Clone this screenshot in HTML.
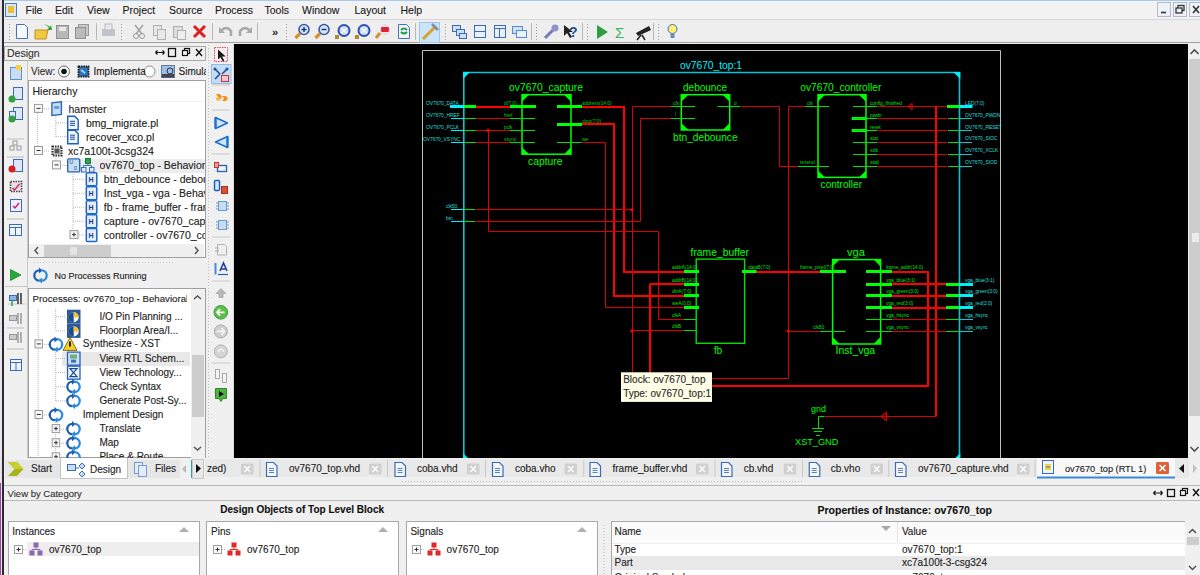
<!DOCTYPE html>
<html><head><meta charset="utf-8">
<style>
*{box-sizing:border-box;margin:0;padding:0}
html,body{width:1200px;height:575px;overflow:hidden;background:#f0f0f0;font-family:"Liberation Sans",sans-serif;font-size:10px;color:#1e1e1e}
.a{position:absolute}
.t{position:absolute;white-space:nowrap;-webkit-text-stroke:0.12px currentColor}
svg{position:absolute;overflow:hidden}
</style></head><body>

<div class="a" style="left:0px;top:0px;width:2px;height:575px;background:#e6e2ea;"></div>
<div class="a" style="left:2px;top:0px;width:2px;height:575px;background:#2b2b2b;"></div>
<div class="a" style="left:0px;top:483px;width:1px;height:92px;background:#a040a8;"></div>
<div class="a" style="left:4px;top:0px;width:1196px;height:1px;background:#a8c8ee;"></div>
<div class="a" style="left:4px;top:1px;width:1196px;height:18px;background:#f2f2f2;"></div>
<div class="a" style="left:4px;top:19px;width:1196px;height:1px;background:#d8d8d8;"></div>
<div class="a" style="left:4px;top:20px;width:1196px;height:22px;background:#eeeeee;"></div>
<div class="a" style="left:4px;top:42px;width:1196px;height:1px;background:#a0a0a0;"></div>
<div class="a" style="left:4px;top:43px;width:1196px;height:2px;background:#f0f0f0;"></div>
<svg style="left:5px;top:3px" width="12" height="14"><rect x="0.5" y="0.5" width="11" height="13" fill="#d8e8f8" stroke="#4a7cc0"/><rect x="3" y="3" width="6" height="7" fill="#f0c030"/></svg>
<div class="t" style="left:25.5px;top:3.0px;line-height:14px;font-size:10.5px;color:#1a1a1a;">File</div>
<div class="t" style="left:55px;top:3.0px;line-height:14px;font-size:10.5px;color:#1a1a1a;">Edit</div>
<div class="t" style="left:87px;top:3.0px;line-height:14px;font-size:10.5px;color:#1a1a1a;">View</div>
<div class="t" style="left:122.5px;top:3.0px;line-height:14px;font-size:10.5px;color:#1a1a1a;">Project</div>
<div class="t" style="left:169px;top:3.0px;line-height:14px;font-size:10.5px;color:#1a1a1a;">Source</div>
<div class="t" style="left:215px;top:3.0px;line-height:14px;font-size:10.5px;color:#1a1a1a;">Process</div>
<div class="t" style="left:264.5px;top:3.0px;line-height:14px;font-size:10.5px;color:#1a1a1a;">Tools</div>
<div class="t" style="left:302px;top:3.0px;line-height:14px;font-size:10.5px;color:#1a1a1a;">Window</div>
<div class="t" style="left:354.5px;top:3.0px;line-height:14px;font-size:10.5px;color:#1a1a1a;">Layout</div>
<div class="t" style="left:400.5px;top:3.0px;line-height:14px;font-size:10.5px;color:#1a1a1a;">Help</div>
<div class="a" style="left:1156.5px;top:1.5px;width:14.5px;height:15px;background:#eef2f8;border:1px solid #b4bcc8"></div>
<div class="a" style="left:1172.5px;top:1.5px;width:14.5px;height:15px;background:#eef2f8;border:1px solid #b4bcc8"></div>
<div class="a" style="left:1188.5px;top:1.5px;width:13.5px;height:15px;background:#eef2f8;border:1px solid #b4bcc8"></div>
<svg style="left:1156px;top:1px" width="44" height="17"><path d="M5 11.5h5" stroke="#333" stroke-width="1.6"/><rect x="22" y="4.5" width="6" height="5" fill="none" stroke="#333" stroke-width="1.3"/><rect x="20" y="7" width="6" height="5" fill="#eef2f8" stroke="#333" stroke-width="1.3"/><path d="M37 5l6 7M43 5l-6 7" stroke="#333" stroke-width="1.6"/></svg>

<svg style="left:0;top:0" width="700" height="45">
 <!-- new -->
 <path d="M16.5 24.5h8l3 3v11h-11z" fill="#f4f8ff" stroke="#4a70b8"/>
 <!-- open -->
 <path d="M35 30h13l-2 9h-11z" fill="#f0c840" stroke="#c09020"/><path d="M40 27q5-5 9 1l-2 2h5l-1-5-1 2q-5-5-10 0z" fill="#30a030"/>
 <!-- save -->
 <rect x="56.5" y="25.5" width="12" height="13" fill="#b8b8b8" stroke="#909090"/><rect x="59" y="27" width="7" height="4" fill="#e8e8e8"/>
 <rect x="78.5" y="24.5" width="10" height="11" fill="#c8c8c8" stroke="#999"/><rect x="75.5" y="27.5" width="10" height="11" fill="#bbb" stroke="#909090"/>
 <!-- print -->
 <rect x="102" y="29" width="13" height="7" fill="#c0c4cc"/><rect x="105" y="24" width="7" height="6" fill="#e8e8f0" stroke="#bbb"/>
 <!-- cut copy paste -->
 <path d="M135 25l7 9M143 25l-7 9" stroke="#a0a0a0" stroke-width="1.5"/><circle cx="136" cy="36" r="2.5" fill="none" stroke="#999"/><circle cx="142" cy="36" r="2.5" fill="none" stroke="#999"/>
 <rect x="153.5" y="25.5" width="8" height="10" fill="#e8e8e8" stroke="#b0b0b0"/><rect x="157.5" y="29.5" width="8" height="10" fill="#e8e8e8" stroke="#b0b0b0"/>
 <rect x="173.5" y="26.5" width="9" height="11" fill="#ddd" stroke="#b0b0b0"/><rect x="177.5" y="30.5" width="8" height="9" fill="#eee" stroke="#b0b0b0"/>
 <path d="M194 26l11 11M205 26l-11 11" stroke="#e02020" stroke-width="3"/>
 <!-- undo redo -->
 <path d="M221 31q5-6 10 0v5" fill="none" stroke="#a8a8a8" stroke-width="2.5"/><path d="M219 27v6h6z" fill="#a8a8a8"/>
 <path d="M250 31q-5-6-10 0v5" fill="none" stroke="#a8a8a8" stroke-width="2.5"/><path d="M252 27v6h-6z" fill="#a8a8a8"/>
 <text x="272" y="36" font-size="11" font-weight="bold" fill="#222" font-family="Liberation Sans">&#187;</text>
 <!-- zoom tools -->
 <g>
 <circle cx="304" cy="29.5" r="5" fill="#d8e8fa" stroke="#3a5aa8" stroke-width="1.6"/><path d="M301.5 29.5h5M304 27v5" stroke="#1a3a80" stroke-width="1.5"/><path d="M300 33.5l-4.5 4.5" stroke="#d89030" stroke-width="3.2"/>
 <circle cx="324" cy="29.5" r="5" fill="#d8e8fa" stroke="#3a5aa8" stroke-width="1.6"/><path d="M321.5 29.5h5" stroke="#1a3a80" stroke-width="1.5"/><path d="M320 33.5l-4.5 4.5" stroke="#d89030" stroke-width="3.2"/>
 <circle cx="344" cy="30.5" r="5.5" fill="#c8dcf4" stroke="#3050b0" stroke-width="2"/><path d="M341 27.5l6 6M347 27.5l-6 6" stroke="#f4f8ff" stroke-width="1.3"/><rect x="335" y="35" width="4" height="4" fill="#b08a30"/>
 <circle cx="364" cy="30.5" r="5.5" fill="#c8dcf4" stroke="#3050b0" stroke-width="2"/><path d="M361 27.5l6 6M367 27.5l-6 6" stroke="#f4f8ff" stroke-width="1.3"/><rect x="355" y="35" width="4" height="4" fill="#b08a30"/>
 <rect x="381" y="27" width="8" height="5" fill="#e02030"/><circle cx="385" cy="29.5" r="4.5" fill="none" stroke="#d8c8e0"/><path d="M380 33l-4 5" stroke="#d89030" stroke-width="3.2"/>
 </g>
 <path d="M398.5 24.5h8l3 3v11h-11z" fill="#eef4ff" stroke="#4a70b8"/><path d="M401 30q3-3 6 0M407 32q-3 3-6 0" fill="none" stroke="#20a040" stroke-width="2"/>
 <!-- highlighted hammer -->
 <rect x="419.5" y="22.5" width="20" height="20" fill="#cce4f7" stroke="#99c9ef"/>
 <path d="M423 39l12-12" stroke="#d8a030" stroke-width="3"/><path d="M431 25l6 6 2-2-6-6z" fill="#8a8aa0"/>
 <!-- window layout icons -->
 <rect x="452.5" y="25.5" width="8" height="6" fill="#cfe0f5" stroke="#3a6ab8"/><rect x="456.5" y="29.5" width="8" height="6" fill="#cfe0f5" stroke="#3a6ab8"/><rect x="459.5" y="33.5" width="7" height="5" fill="#cfe0f5" stroke="#3a6ab8"/>
 <rect x="474.5" y="25.5" width="11" height="12" fill="#e8f0fa" stroke="#3a6ab8"/><path d="M474.5 31.5h11" stroke="#3a6ab8"/>
 <rect x="494.5" y="25.5" width="11" height="12" fill="#e8f0fa" stroke="#3a6ab8"/><path d="M494.5 28.5h11M499.5 28.5v9" stroke="#3a6ab8"/>
 <rect x="512.5" y="26.5" width="10" height="7" fill="#cfe0f5" stroke="#5a8ad0"/><rect x="516.5" y="30.5" width="10" height="7" fill="#e8f0fa" stroke="#5a8ad0"/>
 <!-- wrench, help -->
 <path d="M545 38l9-9" stroke="#7878b8" stroke-width="3"/><circle cx="555" cy="28" r="3.5" fill="#9090c8"/>
 <path d="M564 25l0 11 3-3 3 5 2-1-3-5h4z" fill="#222"/><text x="569" y="37" font-size="14" font-weight="bold" fill="#1e4ea0" font-family="Liberation Sans">?</text>
 <!-- run, sigma, telescope -->
 <path d="M597 25l11 7-11 7z" fill="#2aa040"/>
 <text x="615" y="38" font-size="15" fill="#40b860" font-family="Liberation Sans">&#931;</text>
 <path d="M636 33l13-7 2 4-13 6z" fill="#222"/><path d="M641 35l-4 5M642 35l3 5" stroke="#222" stroke-width="1.5"/>
 <!-- bulb -->
 <circle cx="672.5" cy="29" r="4.5" fill="#fff070" stroke="#3a70c0"/><rect x="670.5" y="33" width="4" height="5" fill="#6a8ac0"/>
</svg>
<div class="a" style="left:96px;top:23px;width:1px;height:17px;background:#b8b8b8;"></div>
<div class="a" style="left:121px;top:24px;width:1px;height:1px;background:#9a9a9a;"></div>
<div class="a" style="left:121px;top:27px;width:1px;height:1px;background:#9a9a9a;"></div>
<div class="a" style="left:121px;top:30px;width:1px;height:1px;background:#9a9a9a;"></div>
<div class="a" style="left:121px;top:33px;width:1px;height:1px;background:#9a9a9a;"></div>
<div class="a" style="left:121px;top:36px;width:1px;height:1px;background:#9a9a9a;"></div>
<div class="a" style="left:121px;top:39px;width:1px;height:1px;background:#9a9a9a;"></div>
<div class="a" style="left:212px;top:23px;width:1px;height:17px;background:#b8b8b8;"></div>
<div class="a" style="left:257px;top:23px;width:1px;height:17px;background:#b8b8b8;"></div>
<div class="a" style="left:286px;top:24px;width:1px;height:1px;background:#9a9a9a;"></div>
<div class="a" style="left:286px;top:27px;width:1px;height:1px;background:#9a9a9a;"></div>
<div class="a" style="left:286px;top:30px;width:1px;height:1px;background:#9a9a9a;"></div>
<div class="a" style="left:286px;top:33px;width:1px;height:1px;background:#9a9a9a;"></div>
<div class="a" style="left:286px;top:36px;width:1px;height:1px;background:#9a9a9a;"></div>
<div class="a" style="left:286px;top:39px;width:1px;height:1px;background:#9a9a9a;"></div>
<div class="a" style="left:415px;top:23px;width:1px;height:17px;background:#b8b8b8;"></div>
<div class="a" style="left:445px;top:24px;width:1px;height:1px;background:#9a9a9a;"></div>
<div class="a" style="left:445px;top:27px;width:1px;height:1px;background:#9a9a9a;"></div>
<div class="a" style="left:445px;top:30px;width:1px;height:1px;background:#9a9a9a;"></div>
<div class="a" style="left:445px;top:33px;width:1px;height:1px;background:#9a9a9a;"></div>
<div class="a" style="left:445px;top:36px;width:1px;height:1px;background:#9a9a9a;"></div>
<div class="a" style="left:445px;top:39px;width:1px;height:1px;background:#9a9a9a;"></div>
<div class="a" style="left:531px;top:23px;width:1px;height:17px;background:#b8b8b8;"></div>
<div class="a" style="left:536px;top:24px;width:1px;height:1px;background:#9a9a9a;"></div>
<div class="a" style="left:536px;top:27px;width:1px;height:1px;background:#9a9a9a;"></div>
<div class="a" style="left:536px;top:30px;width:1px;height:1px;background:#9a9a9a;"></div>
<div class="a" style="left:536px;top:33px;width:1px;height:1px;background:#9a9a9a;"></div>
<div class="a" style="left:536px;top:36px;width:1px;height:1px;background:#9a9a9a;"></div>
<div class="a" style="left:536px;top:39px;width:1px;height:1px;background:#9a9a9a;"></div>
<div class="a" style="left:582px;top:23px;width:1px;height:17px;background:#b8b8b8;"></div>
<div class="a" style="left:587px;top:24px;width:1px;height:1px;background:#9a9a9a;"></div>
<div class="a" style="left:587px;top:27px;width:1px;height:1px;background:#9a9a9a;"></div>
<div class="a" style="left:587px;top:30px;width:1px;height:1px;background:#9a9a9a;"></div>
<div class="a" style="left:587px;top:33px;width:1px;height:1px;background:#9a9a9a;"></div>
<div class="a" style="left:587px;top:36px;width:1px;height:1px;background:#9a9a9a;"></div>
<div class="a" style="left:587px;top:39px;width:1px;height:1px;background:#9a9a9a;"></div>
<div class="a" style="left:653px;top:23px;width:1px;height:17px;background:#b8b8b8;"></div>
<div class="a" style="left:658px;top:24px;width:1px;height:1px;background:#9a9a9a;"></div>
<div class="a" style="left:658px;top:27px;width:1px;height:1px;background:#9a9a9a;"></div>
<div class="a" style="left:658px;top:30px;width:1px;height:1px;background:#9a9a9a;"></div>
<div class="a" style="left:658px;top:33px;width:1px;height:1px;background:#9a9a9a;"></div>
<div class="a" style="left:658px;top:36px;width:1px;height:1px;background:#9a9a9a;"></div>
<div class="a" style="left:658px;top:39px;width:1px;height:1px;background:#9a9a9a;"></div>
<div class="a" style="left:8.5px;top:24px;width:1px;height:1px;background:#9a9a9a;"></div>
<div class="a" style="left:8.5px;top:27px;width:1px;height:1px;background:#9a9a9a;"></div>
<div class="a" style="left:8.5px;top:30px;width:1px;height:1px;background:#9a9a9a;"></div>
<div class="a" style="left:8.5px;top:33px;width:1px;height:1px;background:#9a9a9a;"></div>
<div class="a" style="left:8.5px;top:36px;width:1px;height:1px;background:#9a9a9a;"></div>
<div class="a" style="left:8.5px;top:39px;width:1px;height:1px;background:#9a9a9a;"></div>
<div class="a" style="left:4px;top:45px;width:203px;height:415px;background:#f0f0f0;"></div>
<div class="a" style="left:4px;top:45.5px;width:202px;height:15px;background:#f0f0f0;border:1px solid #a8a8a8"></div>
<div class="t" style="left:7px;top:46.0px;line-height:14px;font-size:10.5px;color:#333;">Design</div>
<svg style="left:150px;top:46px" width="56" height="14">
<path d="M5.5 6.5h9M5.5 6.5l2-2M5.5 6.5l2 2M14.5 6.5l-2-2M14.5 6.5l-2 2" stroke="#111" stroke-width="1.2" fill="none"/>
<rect x="18.5" y="2.5" width="7" height="8" fill="none" stroke="#111" stroke-width="1.3"/>
<rect x="34.5" y="2.5" width="5" height="5" fill="none" stroke="#111" stroke-width="1.2"/><rect x="32.5" y="4.5" width="5" height="5" fill="#f0f0f0" stroke="#111" stroke-width="1.2"/>
<path d="M46 3l6 7M52 3l-6 7" stroke="#111" stroke-width="1.4"/>
</svg>
<div class="a" style="left:27px;top:61px;width:1px;height:397px;background:#c8c8c8;"></div>
<div class="t" style="left:31px;top:65.0px;line-height:14px;font-size:10px;color:#333;">View:</div>
<svg style="left:55px;top:64px" width="160" height="16">
<circle cx="9" cy="7.5" r="5.5" fill="#fff" stroke="#666"/><circle cx="9" cy="7.5" r="2.8" fill="#111"/>
<rect x="23.5" y="2.5" width="10" height="10" fill="#2f78c8" stroke="#1a1a1a" stroke-width="1.8" stroke-dasharray="1.6 0.8"/><path d="M26 6l4 3" stroke="#e8f0ff" stroke-width="1.2"/>
<circle cx="94.5" cy="7.5" r="5.5" fill="#fff" stroke="#888"/>
<rect x="106.5" y="1.5" width="13" height="12" fill="#9ac0ec" stroke="#6a7a90"/><circle cx="115" cy="7" r="3" fill="none" stroke="#333"/><rect x="107" y="10" width="12" height="3.5" fill="#445"/>
</svg>
<div class="t" style="left:93.5px;top:65.0px;line-height:14px;font-size:10px;color:#222;">Implementa</div>
<div class="t" style="left:178.5px;top:65.0px;line-height:14px;font-size:10px;color:#222;">Simula</div>
<div class="a" style="left:28px;top:80px;width:178px;height:1px;background:#a0a0a0;"></div>
<div class="a" style="left:28px;top:81px;width:177.5px;height:177px;background:#ffffff;border-left:1px solid #a0a0a0;border-right:1px solid #a0a0a0;border-bottom:1px solid #a0a0a0"></div>
<div class="t" style="left:32.5px;top:84.0px;line-height:14px;font-size:10.5px;color:#222;">Hierarchy</div>
<div class="a" style="left:29px;top:101px;width:175px;height:1px;background:#f0f0f0;"></div>
<div class="a" style="left:67px;top:158.5px;width:138px;height:14px;background:#ececec;"></div>
<svg style="left:28px;top:101px" width="177" height="142"><path d="M9.600000000000001 12V50" stroke="#b8b8b8" stroke-dasharray="1 1"/><path d="M14 7.900000000000006H22" stroke="#b8b8b8" stroke-dasharray="1 1"/><path d="M14 50H22" stroke="#b8b8b8" stroke-dasharray="1 1"/><path d="M27.799999999999997 15V36" stroke="#b8b8b8" stroke-dasharray="1 1"/><path d="M28 21.799999999999997H39" stroke="#b8b8b8" stroke-dasharray="1 1"/><path d="M28 35.69999999999999H39" stroke="#b8b8b8" stroke-dasharray="1 1"/><path d="M27.799999999999997 55V64" stroke="#b8b8b8" stroke-dasharray="1 1"/><path d="M32 64.4H39" stroke="#b8b8b8" stroke-dasharray="1 1"/><path d="M45 71V134" stroke="#b8b8b8" stroke-dasharray="1 1"/><path d="M45 78.30000000000001H57" stroke="#b8b8b8" stroke-dasharray="1 1"/><path d="M45 92.30000000000001H57" stroke="#b8b8b8" stroke-dasharray="1 1"/><path d="M45 106.19999999999999H57" stroke="#b8b8b8" stroke-dasharray="1 1"/><path d="M45 120.19999999999999H57" stroke="#b8b8b8" stroke-dasharray="1 1"/><path d="M49 134.1H57" stroke="#b8b8b8" stroke-dasharray="1 1"/><rect x="6.5" y="3.4000000000000057" width="8" height="8" fill="#f6f6f6" stroke="#9a9a9a"/><path d="M8.5 7.400000000000006h4" stroke="#333"/><rect x="6.5" y="45.5" width="8" height="8" fill="#f6f6f6" stroke="#9a9a9a"/><path d="M8.5 49.5h4" stroke="#333"/><rect x="24.5" y="59.900000000000006" width="8" height="8" fill="#f6f6f6" stroke="#9a9a9a"/><path d="M26.5 63.900000000000006h4" stroke="#333"/><rect x="42.0" y="129.6" width="8" height="8" fill="#f6f6f6" stroke="#9a9a9a"/><path d="M44.0 133.6h4" stroke="#333"/><path d="M46.0 131.6v4" stroke="#333"/><path d="M23.900000000000002 1.9000000000000057l9.5 -1v12.5l-9.5 1z" fill="#c8def6" stroke="#2a68b8" stroke-width="1.4"/><rect x="26.200000000000003" y="4.900000000000006" width="5" height="3" fill="#6a9ad8"/><path d="M39.7 15.299999999999997h7l3.5 3.5v10h-10.5z" fill="#eef4fc" stroke="#1f5fb8" stroke-width="1.4"/><path d="M42 20.299999999999997h5M42 22.299999999999997h5M42 24.299999999999997h5" stroke="#1a4a9a"/><path d="M39.7 29.19999999999999h7l3.5 3.5v10h-10.5z" fill="#eef4fc" stroke="#1f5fb8" stroke-width="1.4"/><path d="M42 34.19999999999999h5M42 36.19999999999999h5M42 38.19999999999999h5" stroke="#1a4a9a"/><rect x="24.5" y="45.5" width="9" height="9" fill="#e8e8e8" stroke="#333" stroke-width="2.2" stroke-dasharray="1.5 1"/><rect x="26.5" y="47.5" width="5" height="5" fill="#555"/><rect x="39.7" y="57.900000000000006" width="12" height="13" rx="1" fill="#c8def6" stroke="#2a68b8" stroke-width="1.4"/><text x="41.5" y="63.400000000000006" font-size="5" fill="#1a3a80" font-family="Liberation Sans">U</text><text x="46" y="69.4" font-size="5" fill="#1a3a80" font-family="Liberation Sans">0</text><rect x="57.5" y="57.5" width="5" height="5" fill="#30a050" stroke="#1a7a30"/><rect x="53.5" y="66.5" width="4.5" height="4.5" fill="#dde8f8" stroke="#3a70b8"/><rect x="61.5" y="66.5" width="4.5" height="4.5" fill="#dde8f8" stroke="#3a70b8"/><path d="M60 62.5v2M55.5 66.5v-2h8v2" stroke="#3a70b8" fill="none"/><rect x="58.3" y="71.80000000000001" width="10.5" height="13" rx="1" fill="#e4eefa" stroke="#1f68c8" stroke-width="1.5"/><text x="60.599999999999994" y="81.30000000000001" font-size="7" font-weight="bold" fill="#1a3a80" font-family="Liberation Sans">H</text><rect x="58.3" y="85.80000000000001" width="10.5" height="13" rx="1" fill="#e4eefa" stroke="#1f68c8" stroke-width="1.5"/><text x="60.599999999999994" y="95.30000000000001" font-size="7" font-weight="bold" fill="#1a3a80" font-family="Liberation Sans">H</text><rect x="58.3" y="99.69999999999999" width="10.5" height="13" rx="1" fill="#e4eefa" stroke="#1f68c8" stroke-width="1.5"/><text x="60.599999999999994" y="109.19999999999999" font-size="7" font-weight="bold" fill="#1a3a80" font-family="Liberation Sans">H</text><rect x="58.3" y="113.69999999999999" width="10.5" height="13" rx="1" fill="#e4eefa" stroke="#1f68c8" stroke-width="1.5"/><text x="60.599999999999994" y="123.19999999999999" font-size="7" font-weight="bold" fill="#1a3a80" font-family="Liberation Sans">H</text><rect x="58.3" y="127.6" width="10.5" height="13" rx="1" fill="#e4eefa" stroke="#1f68c8" stroke-width="1.5"/><text x="60.599999999999994" y="137.1" font-size="7" font-weight="bold" fill="#1a3a80" font-family="Liberation Sans">H</text></svg>
<div class="t" style="left:68.5px;top:101.9px;line-height:14px;font-size:10.5px;color:#222;width:136.5px;overflow:hidden">hamster</div>
<div class="t" style="left:86px;top:115.8px;line-height:14px;font-size:10.5px;color:#222;width:119px;overflow:hidden">bmg_migrate.pl</div>
<div class="t" style="left:86px;top:129.7px;line-height:14px;font-size:10.5px;color:#222;width:119px;overflow:hidden">recover_xco.pl</div>
<div class="t" style="left:68px;top:144.0px;line-height:14px;font-size:10.5px;color:#222;width:137px;overflow:hidden">xc7a100t-3csg324</div>
<div class="t" style="left:99.6px;top:158.4px;line-height:14px;font-size:10.5px;color:#222;width:105.4px;overflow:hidden">ov7670_top - Behavioral (ov7670_top.vhd)</div>
<div class="t" style="left:103.8px;top:172.3px;line-height:14px;font-size:10.5px;color:#222;width:101.2px;overflow:hidden">btn_debounce - debounce - Behavioral</div>
<div class="t" style="left:103.8px;top:186.3px;line-height:14px;font-size:10.5px;color:#222;width:101.2px;overflow:hidden">Inst_vga - vga - Behavioral</div>
<div class="t" style="left:103.8px;top:200.2px;line-height:14px;font-size:10.5px;color:#222;width:101.2px;overflow:hidden">fb - frame_buffer - frame_buffer</div>
<div class="t" style="left:103.8px;top:214.2px;line-height:14px;font-size:10.5px;color:#222;width:101.2px;overflow:hidden">capture - ov7670_capture - Behavioral</div>
<div class="t" style="left:103.8px;top:228.1px;line-height:14px;font-size:10.5px;color:#222;width:101.2px;overflow:hidden">controller - ov7670_controller - Behavioral</div>
<div class="a" style="left:29px;top:243.5px;width:175px;height:13.5px;background:#f0f0f0;"></div>
<div class="a" style="left:44px;top:244.5px;width:67px;height:12px;background:#cdcdcd;"></div>
<div class="a" style="left:70px;top:246.5px;width:7px;height:8px;background:#e4e4e4;"></div>
<svg style="left:29px;top:243px" width="176" height="15"><path d="M9 4l-3 3.5 3 3.5" fill="none" stroke="#555" stroke-width="1.5"/><path d="M166 4l3 3.5-3 3.5" fill="none" stroke="#555" stroke-width="1.5"/></svg>
<svg style="left:4px;top:259px" width="200" height="28"><path d="M6.5 10.5l10.5 5.5-10.5 5.5z" fill="#28a83a" stroke="#1a8a2a" stroke-width="0.8"/><g transform="translate(36.5,16.5)"><path d="M-1 -5.2A5.2 5.2 0 0 0 -1 5.2" stroke="#1f5fb0" stroke-width="2.3" fill="none"/><path d="M-1.5 -8l3.5 3-3.5 3z" fill="#1f5fb0"/><path d="M1 5.2A5.2 5.2 0 0 0 1 -5.2" stroke="#2a8ae0" stroke-width="2.3" fill="none"/><path d="M1.5 8l-3.5-3 3.5-3z" fill="#2a8ae0"/></g><path d="M30 3.5H170" stroke="#c8c8c8" stroke-dasharray="1 2"/></svg>
<div class="a" style="left:5px;top:286px;width:22px;height:1px;background:#c8c8c8;"></div>
<div class="t" style="left:54.5px;top:268.5px;line-height:14px;font-size:9px;color:#222;">No Processes Running</div>
<div class="a" style="left:28px;top:288px;width:177.5px;height:170px;background:#ffffff;border:1px solid #a0a0a0"></div>
<div class="t" style="left:32.6px;top:292.0px;line-height:14px;font-size:9.7px;color:#222;width:154px;overflow:hidden">Processes: ov7670_top - Behavioral</div>
<div class="a" style="left:190.5px;top:289px;width:14px;height:169px;background:#f0f0f0;"></div>
<div class="a" style="left:192px;top:354.7px;width:12px;height:62px;background:#cdcdcd;"></div>
<svg style="left:190px;top:289px" width="15" height="169"><path d="M4 10l3.5-3 3.5 3" fill="none" stroke="#555" stroke-width="1.5"/><path d="M4 158l3.5 3 3.5-3" fill="none" stroke="#555" stroke-width="1.5"/></svg>
<div class="a" style="left:62px;top:351.6px;width:128px;height:14px;background:#e8e8e8;"></div>
<svg style="left:28px;top:309px" width="162" height="149"><path d="M10.200000000000003 0V31" stroke="#b8b8b8" stroke-dasharray="1 1"/><path d="M10.200000000000003 40V102" stroke="#b8b8b8" stroke-dasharray="1 1"/><path d="M10.200000000000003 110V151" stroke="#b8b8b8" stroke-dasharray="1 1"/><path d="M27.700000000000003 0V22" stroke="#b8b8b8" stroke-dasharray="1 1"/><path d="M28 7.699999999999989H38" stroke="#b8b8b8" stroke-dasharray="1 1"/><path d="M28 21.899999999999977H38" stroke="#b8b8b8" stroke-dasharray="1 1"/><path d="M27.700000000000003 41V92" stroke="#b8b8b8" stroke-dasharray="1 1"/><path d="M28 49.60000000000002H38" stroke="#b8b8b8" stroke-dasharray="1 1"/><path d="M28 63.69999999999999H38" stroke="#b8b8b8" stroke-dasharray="1 1"/><path d="M28 77.80000000000001H38" stroke="#b8b8b8" stroke-dasharray="1 1"/><path d="M28 91.89999999999998H38" stroke="#b8b8b8" stroke-dasharray="1 1"/><path d="M14 35.39999999999998H21" stroke="#b8b8b8" stroke-dasharray="1 1"/><path d="M14 106H21" stroke="#b8b8b8" stroke-dasharray="1 1"/><path d="M27.700000000000003 111V151" stroke="#b8b8b8" stroke-dasharray="1 1"/><path d="M31 120.10000000000002H38" stroke="#b8b8b8" stroke-dasharray="1 1"/><path d="M31 134.2H38" stroke="#b8b8b8" stroke-dasharray="1 1"/><path d="M31 148.3H38" stroke="#b8b8b8" stroke-dasharray="1 1"/><rect x="7.0" y="30.899999999999977" width="7.5" height="8" fill="#f6f6f6" stroke="#9a9a9a"/><path d="M8.8 34.89999999999998h4" stroke="#333"/><rect x="7.0" y="101.5" width="7.5" height="8" fill="#f6f6f6" stroke="#9a9a9a"/><path d="M8.8 105.5h4" stroke="#333"/><rect x="24.200000000000003" y="115.60000000000002" width="7.5" height="8" fill="#f6f6f6" stroke="#9a9a9a"/><path d="M26.000000000000004 119.60000000000002h4" stroke="#333"/><path d="M28.000000000000004 117.60000000000002v4" stroke="#333"/><rect x="24.200000000000003" y="129.7" width="7.5" height="8" fill="#f6f6f6" stroke="#9a9a9a"/><path d="M26.000000000000004 133.7h4" stroke="#333"/><path d="M28.000000000000004 131.7v4" stroke="#333"/><rect x="24.200000000000003" y="143.8" width="7.5" height="8" fill="#f6f6f6" stroke="#9a9a9a"/><path d="M26.000000000000004 147.8h4" stroke="#333"/><path d="M28.000000000000004 145.8v4" stroke="#333"/><rect x="39" y="0.6999999999999886" width="13.5" height="14" fill="#2a5a9a"/><circle cx="45.7" cy="8.199999999999989" r="5" fill="#f4f4f4"/><path d="M45.7 3.1999999999999886a5 5 0 0 0 0 10z" fill="#1a4a90"/><path d="M45.7 3.1999999999999886a5 5 0 0 1 5 5h-5z" fill="#f8c020"/><rect x="39" y="14.899999999999977" width="13.5" height="14" fill="#2a5a9a"/><circle cx="45.7" cy="22.399999999999977" r="5" fill="#f4f4f4"/><path d="M45.7 17.399999999999977a5 5 0 0 0 0 10z" fill="#1a4a90"/><path d="M45.7 17.399999999999977a5 5 0 0 1 5 5h-5z" fill="#f8c020"/><g transform="translate(28.0,35.39999999999998)"><path d="M-1 -5.2A5.2 5.2 0 0 0 -1 5.2" stroke="#1f5fb0" stroke-width="2.3" fill="none"/><path d="M-1.5 -8l3.5 3-3.5 3z" fill="#1f5fb0"/><path d="M1 5.2A5.2 5.2 0 0 0 1 -5.2" stroke="#2a8ae0" stroke-width="2.3" fill="none"/><path d="M1.5 8l-3.5-3 3.5-3z" fill="#2a8ae0"/></g><path d="M42 28.399999999999977l7 13h-14z" fill="#f8d020" stroke="#605010" stroke-width="0.8"/><path d="M42 32.39999999999998v5" stroke="#111" stroke-width="1.8"/><rect x="39.5" y="43.10000000000002" width="12.5" height="13" fill="#cfe0f6" stroke="#2a60b8" stroke-width="1.3"/><rect x="42" y="45.60000000000002" width="7" height="4" fill="#70b070"/><path d="M43 50.60000000000002h5v3h-5z" fill="#3a70c0"/><rect x="39.5" y="57.19999999999999" width="12.5" height="13" fill="#eef4fc" stroke="#2a60b8" stroke-width="1.3"/><path d="M42 59.69999999999999h7l-7 8h7z" fill="none" stroke="#1a4a9a" stroke-width="1.2"/><g transform="translate(45.5,77.80000000000001)"><path d="M-1 -5.2A5.2 5.2 0 0 0 -1 5.2" stroke="#1f5fb0" stroke-width="2.3" fill="none"/><path d="M-1.5 -8l3.5 3-3.5 3z" fill="#1f5fb0"/><path d="M1 5.2A5.2 5.2 0 0 0 1 -5.2" stroke="#2a8ae0" stroke-width="2.3" fill="none"/><path d="M1.5 8l-3.5-3 3.5-3z" fill="#2a8ae0"/></g><g transform="translate(45.5,91.89999999999998)"><path d="M-1 -5.2A5.2 5.2 0 0 0 -1 5.2" stroke="#1f5fb0" stroke-width="2.3" fill="none"/><path d="M-1.5 -8l3.5 3-3.5 3z" fill="#1f5fb0"/><path d="M1 5.2A5.2 5.2 0 0 0 1 -5.2" stroke="#2a8ae0" stroke-width="2.3" fill="none"/><path d="M1.5 8l-3.5-3 3.5-3z" fill="#2a8ae0"/></g><g transform="translate(45.5,120.10000000000002)"><path d="M-1 -5.2A5.2 5.2 0 0 0 -1 5.2" stroke="#1f5fb0" stroke-width="2.3" fill="none"/><path d="M-1.5 -8l3.5 3-3.5 3z" fill="#1f5fb0"/><path d="M1 5.2A5.2 5.2 0 0 0 1 -5.2" stroke="#2a8ae0" stroke-width="2.3" fill="none"/><path d="M1.5 8l-3.5-3 3.5-3z" fill="#2a8ae0"/></g><g transform="translate(45.5,134.2)"><path d="M-1 -5.2A5.2 5.2 0 0 0 -1 5.2" stroke="#1f5fb0" stroke-width="2.3" fill="none"/><path d="M-1.5 -8l3.5 3-3.5 3z" fill="#1f5fb0"/><path d="M1 5.2A5.2 5.2 0 0 0 1 -5.2" stroke="#2a8ae0" stroke-width="2.3" fill="none"/><path d="M1.5 8l-3.5-3 3.5-3z" fill="#2a8ae0"/></g><g transform="translate(45.5,148.3)"><path d="M-1 -5.2A5.2 5.2 0 0 0 -1 5.2" stroke="#1f5fb0" stroke-width="2.3" fill="none"/><path d="M-1.5 -8l3.5 3-3.5 3z" fill="#1f5fb0"/><path d="M1 5.2A5.2 5.2 0 0 0 1 -5.2" stroke="#2a8ae0" stroke-width="2.3" fill="none"/><path d="M1.5 8l-3.5-3 3.5-3z" fill="#2a8ae0"/></g><g transform="translate(28.0,106)"><path d="M-1 -5.2A5.2 5.2 0 0 0 -1 5.2" stroke="#1f5fb0" stroke-width="2.3" fill="none"/><path d="M-1.5 -8l3.5 3-3.5 3z" fill="#1f5fb0"/><path d="M1 5.2A5.2 5.2 0 0 0 1 -5.2" stroke="#2a8ae0" stroke-width="2.3" fill="none"/><path d="M1.5 8l-3.5-3 3.5-3z" fill="#2a8ae0"/></g></svg>
<div class="t" style="left:99.4px;top:309.7px;line-height:14px;font-size:10px;color:#222">I/O Pin Planning ...</div>
<div class="t" style="left:99.4px;top:323.9px;line-height:14px;font-size:10px;color:#222">Floorplan Area/I...</div>
<div class="t" style="left:82.8px;top:337.4px;line-height:14px;font-size:10px;color:#222">Synthesize - XST</div>
<div class="t" style="left:99.4px;top:351.6px;line-height:14px;font-size:10px;color:#222">View RTL Schem...</div>
<div class="t" style="left:99.4px;top:365.7px;line-height:14px;font-size:10px;color:#222">View Technology...</div>
<div class="t" style="left:99.4px;top:379.8px;line-height:14px;font-size:10px;color:#222">Check Syntax</div>
<div class="t" style="left:99.4px;top:393.9px;line-height:14px;font-size:10px;color:#222">Generate Post-Sy...</div>
<div class="t" style="left:82.8px;top:408.0px;line-height:14px;font-size:10px;color:#222">Implement Design</div>
<div class="t" style="left:99.4px;top:422.1px;line-height:14px;font-size:10px;color:#222">Translate</div>
<div class="t" style="left:99.4px;top:436.2px;line-height:14px;font-size:10px;color:#222">Map</div>
<div class="t" style="left:99.4px;top:450.3px;line-height:14px;font-size:10px;color:#222">Place &amp; Route</div>
<svg style="left:4px;top:61px" width="23" height="400">
<rect x="6.5" y="6.5" width="11" height="12" fill="#c8dcf4" stroke="#6090d0"/><rect x="12" y="4" width="5" height="5" fill="#f8d040"/>
<rect x="9.5" y="26.5" width="9" height="12" fill="#dce8f8" stroke="#3a6ab8"/><circle cx="8" cy="38" r="3.5" fill="#30a040"/>
<rect x="9.5" y="46.5" width="9" height="12" fill="#dce8f8" stroke="#3a6ab8"/><rect x="5.5" y="50.5" width="6" height="8" fill="#dce8f8" stroke="#3a6ab8"/><circle cx="8" cy="58" r="3.5" fill="#30a040"/>
<path d="M3 78h17" stroke="#bbb"/>
<rect x="6" y="85" width="4" height="4" fill="none" stroke="#999"/><rect x="13" y="85" width="4" height="4" fill="none" stroke="#999"/><rect x="9" y="80" width="4" height="4" fill="none" stroke="#999"/>
<path d="M3 96h17" stroke="#bbb"/>
<rect x="9.5" y="98.5" width="9" height="12" fill="#dce8f8" stroke="#3a6ab8"/><circle cx="8" cy="108" r="3.5" fill="#d02020"/>
<rect x="6.5" y="120.5" width="11" height="10" fill="#e8e0e8" stroke="#444" stroke-width="1.6" stroke-dasharray="1.5 1"/><path d="M8.5 127l2 2 5-6" stroke="#d02060" stroke-width="1.4" fill="none"/>
<rect x="6.5" y="138.5" width="11" height="12" fill="#eef" stroke="#3a6ab8"/><path d="M9 145l2 2 4-5" stroke="#d02060" stroke-width="1.5" fill="none"/>
<path d="M3 158h17" stroke="#bbb"/>
<rect x="5.5" y="163.5" width="12" height="11" fill="#eef4fa" stroke="#3a6ab8"/><path d="M5.5 166.5h12M11.5 166.5v8" stroke="#3a6ab8"/>
<path d="M4 243h18" stroke="#c8c8c8"/>
<rect x="5.5" y="234.5" width="7" height="5" fill="#8ab4e8" stroke="#3a6ab8"/><path d="M14 232v11M17 232v11" stroke="#333" stroke-width="1.5"/><path d="M8 240v5" stroke="#30a040" stroke-width="1.5"/>
<rect x="5.5" y="254.5" width="7" height="5" fill="#ccc" stroke="#999"/><path d="M14 252v11M17 252v11" stroke="#999" stroke-width="1.5"/>
<path d="M3 267h17" stroke="#bbb"/>
<rect x="5.5" y="273.5" width="7" height="5" fill="#ccc" stroke="#999"/><path d="M14 271v11M17 271v11" stroke="#999" stroke-width="1.5"/>
<path d="M3 288h17" stroke="#bbb"/>
<rect x="6.5" y="298.5" width="11" height="11" fill="#eef4fa" stroke="#3a6ab8"/><path d="M6.5 301.5h11M12 301.5v8" stroke="#3a6ab8"/>
</svg>
<div class="a" style="left:206px;top:45px;width:28px;height:413px;background:#f0f0f0;"></div>
<div class="a" style="left:232.5px;top:44px;width:1.5px;height:414px;background:#dcdcdc;"></div>
<svg style="left:207px;top:45px" width="3" height="413"><path d="M1.5 0V413" stroke="#c0c0c0" stroke-dasharray="1 2"/></svg>
<svg style="left:208px;top:44px" width="25" height="414">
<rect x="6.5" y="3.5" width="13" height="14" fill="#fbeef0" stroke="#e04858" stroke-dasharray="1.5 1"/><path d="M10 5.5v10l2.5-2.2 2.2 4.2 1.6-0.9-2.2-4h3.6z" fill="#1a1a1a"/>
<rect x="3.5" y="20.5" width="19.5" height="19" fill="#c4dcf4" stroke="#90bce8"/><path d="M7 25l5 5M19 25l-5 5M12 30l-5 5" fill="none" stroke="#1f4f9f" stroke-width="1.6"/><circle cx="7" cy="25" r="1.5" fill="#1f4f9f"/><circle cx="19" cy="25" r="1.5" fill="#1f4f9f"/><rect x="13.5" y="31.5" width="7" height="6" fill="#f4c8cc" stroke="#d03040"/>
<path d="M4 41h18" stroke="#e0b8b8"/>
<path d="M8 50h4l2 3-2 3h-4l2-3z M14 52h4l2 2.5-2 2.5h-4l2-2.5z" fill="#f09020"/><circle cx="10" cy="55" r="2" fill="#f8c040"/>
<path d="M4 66h18" stroke="#c8c8c8"/>
<path d="M7.5 73.5l12 5.5-12 5.5z" fill="#cfe4fa" stroke="#1f70c8" stroke-width="1.6" stroke-linejoin="round"/><path d="M7.5 73.5v11" stroke="#1f70c8" stroke-width="2.2"/>
<path d="M19.5 92.5l-12 5.5 12 5.5z" fill="#cfe4fa" stroke="#1f70c8" stroke-width="1.6" stroke-linejoin="round"/><path d="M19.5 92.5v11" stroke="#1f70c8" stroke-width="2.2"/>
<path d="M4 110h18" stroke="#c8c8c8"/>
<rect x="9.5" y="121.5" width="9" height="6" fill="#eef4fc" stroke="#2a60b0" stroke-width="1.3"/><rect x="6.5" y="118.5" width="4" height="5" fill="#e8a0a0" stroke="#d03030"/>
<rect x="6.5" y="136.5" width="5" height="10" rx="1" fill="#dce8f8" stroke="#1f60c0" stroke-width="1.5"/><rect x="13.5" y="142.5" width="6" height="7" fill="#e05030" stroke="#a03020"/>
<rect x="10.5" y="157.5" width="8" height="9" fill="#c8dcf0" stroke="#6a9ad0"/><path d="M8 159h2M8 162h2M8 165h2M19 159h2M19 162h2M19 165h2" stroke="#6a9ad0"/>
<rect x="10.5" y="176.5" width="8" height="9" fill="#c8dcf0" stroke="#6a9ad0"/><path d="M8 178h2M8 181h2M8 184h2M19 178h2M19 181h2M19 184h2" stroke="#6a9ad0"/>
<path d="M4 193h18" stroke="#c8c8c8"/>
<path d="M9.5 200.5h7l2 2v8.5h-9z" fill="#f0f0f0" stroke="#b0b0b0"/><path d="M7 204h4M7 207h4" stroke="#b0b0b0"/>
<path d="M7.5 219v11.5" stroke="#4a8ad8" stroke-width="2"/><path d="M12 227l3.5-8 3.5 8M13 225h5" fill="none" stroke="#1f3f9f" stroke-width="1.6"/><path d="M10 230.5h10" stroke="#1f5fb8" stroke-width="1.2"/>
<path d="M4 237h18" stroke="#c8c8c8"/>
<path d="M13 244.5l-5 5h3v4h4v-4h3z" fill="#b8b8b8" stroke="#999" stroke-width="0.6"/>
<circle cx="12.8" cy="268.3" r="6.8" fill="#5ac04a" stroke="#3a9a3a"/><path d="M16.5 268.3h-7.5M12 265l-3 3.3 3 3.3" stroke="#fff" stroke-width="1.8" fill="none"/>
<circle cx="12.8" cy="287.4" r="6.5" fill="#cfcfcf" stroke="#aaa"/><path d="M9 287.4h7.5M13.5 284l3 3.4-3 3.4" stroke="#f4f4f4" stroke-width="1.8" fill="none"/>
<circle cx="12.8" cy="307.4" r="6.5" fill="#d4d4d4" stroke="#b4b4b4"/><path d="M10 308q3-6 6 0" stroke="#f4f4f4" stroke-width="1.5" fill="none"/>
<path d="M4 319h18" stroke="#c8c8c8"/>
<rect x="7.5" y="325.5" width="4" height="9" fill="#f4f4f4" stroke="#aaa"/><rect x="14.5" y="329.5" width="4" height="9" fill="#f4f4f4" stroke="#aaa"/>
<path d="M7.5 344.5h11v10h-3.5l-2 3-2-3h-3.5z" fill="#50b040" stroke="#2a8a2a"/><path d="M11 347l5 3-5 3z" fill="#111"/>
</svg>
<svg style="left:234px;top:44px" width="954" height="414"><g transform="translate(-234,-44)">
<rect x="234" y="44" width="954" height="414" fill="#000"/>
<path d="M422.5 470V50.5H1000.5V470" stroke="#c0c0c0" stroke-width="1" fill="none"/>
<path d="M463.8 470V72.5H959.5V470" stroke="#00c8d8" stroke-width="1.6" fill="none"/>
<path d="M463 72h7l-7 7z M960.3 72h-7l7 7z" fill="#00f0ff"/>
<path d="M463 458v-5l5 5z M960.3 458v-5l-5 5z" fill="#00f0ff"/>
<text x="711.0" y="69.0" text-anchor="middle" textLength="62" lengthAdjust="spacingAndGlyphs" font-size="10.3" fill="#00f0ff" font-family="Liberation Sans" >ov7670_top:1</text>
<text x="546.0" y="91.2" text-anchor="middle" textLength="74" lengthAdjust="spacingAndGlyphs" font-size="10.3" fill="#00ff00" font-family="Liberation Sans" >ov7670_capture</text>
<text x="545.25" y="164.5" text-anchor="middle" textLength="34.5" lengthAdjust="spacingAndGlyphs" font-size="10.3" fill="#00ff00" font-family="Liberation Sans" >capture</text>
<rect x="522" y="94.7" width="49" height="59.499999999999986" fill="none" stroke="#00ff00" stroke-width="1.5"/>
<path d="M522 94.7h7l-7 7z M571 94.7h-7l7 7z M522 154.2h7l-7 -7z M571 154.2h-7l7 -7z" fill="#00ff00"/>
<text x="426" y="105.2" font-size="5" fill="#30f0e8" fill-opacity="0.9" font-family="Liberation Sans" letter-spacing="-0.1">OV7670_DATA</text>
<path d="M450 106.5H464" stroke="#00f0ff" stroke-width="3"/>
<path d="M464 106.5H476" stroke="#00ff00" stroke-width="3"/>
<path d="M476 107H510" stroke="#ff0000" stroke-width="2"/>
<path d="M510 106.5H536" stroke="#00ff00" stroke-width="3"/>
<text x="504" y="105.2" font-size="5" fill="#00e000" fill-opacity="0.9" font-family="Liberation Sans" letter-spacing="-0.1">d(7:0)</text>
<text x="426" y="116.8" font-size="5" fill="#30f0e8" fill-opacity="0.9" font-family="Liberation Sans" letter-spacing="-0.1">OV7670_HREF</text>
<path d="M451 118.5H464" stroke="#00f0ff" stroke-width="1"/>
<path d="M464 118.5H476" stroke="#00e000" stroke-width="1"/>
<path d="M476 118.5H510" stroke="#d80000" stroke-width="1"/>
<path d="M510 118.5H535" stroke="#00e000" stroke-width="1"/>
<text x="504" y="116.8" font-size="5" fill="#00e000" fill-opacity="0.9" font-family="Liberation Sans" letter-spacing="-0.1">href</text>
<text x="426" y="128.8" font-size="5" fill="#30f0e8" fill-opacity="0.9" font-family="Liberation Sans" letter-spacing="-0.1">OV7670_PCLK</text>
<path d="M451 130.5H464" stroke="#00f0ff" stroke-width="1"/>
<path d="M464 130.5H476" stroke="#00e000" stroke-width="1"/>
<path d="M476 130.5H510" stroke="#d80000" stroke-width="1"/>
<path d="M510 130.5H535" stroke="#00e000" stroke-width="1"/>
<text x="504" y="128.8" font-size="5" fill="#00e000" fill-opacity="0.9" font-family="Liberation Sans" letter-spacing="-0.1">pclk</text>
<text x="423" y="140.7" font-size="5" fill="#30f0e8" fill-opacity="0.9" font-family="Liberation Sans" letter-spacing="-0.1">OV7670_VSYNC</text>
<path d="M451 142.5H464" stroke="#00f0ff" stroke-width="1"/>
<path d="M464 142.5H476" stroke="#00e000" stroke-width="1"/>
<path d="M476 142.5H510" stroke="#d80000" stroke-width="1"/>
<path d="M510 142.5H535" stroke="#00e000" stroke-width="1"/>
<text x="504" y="140.7" font-size="5" fill="#00e000" fill-opacity="0.9" font-family="Liberation Sans" letter-spacing="-0.1">vsync</text>
<path d="M557 106.5H582" stroke="#00ff00" stroke-width="3"/>
<text x="582" y="105.2" font-size="5" fill="#00e000" fill-opacity="0.9" font-family="Liberation Sans" letter-spacing="-0.1">address(14:0)</text>
<path d="M557 124.5H582" stroke="#00ff00" stroke-width="3"/>
<text x="582" y="122.7" font-size="5" fill="#00e000" fill-opacity="0.9" font-family="Liberation Sans" letter-spacing="-0.1">dout(7:0)</text>
<path d="M557 142.5H582" stroke="#00e000" stroke-width="1"/>
<text x="582" y="140.7" font-size="5" fill="#00e000" fill-opacity="0.9" font-family="Liberation Sans" letter-spacing="-0.1">we</text>
<text x="446" y="208.3" font-size="5" fill="#30f0e8" fill-opacity="0.9" font-family="Liberation Sans" letter-spacing="-0.1">clk50</text>
<path d="M451 209.5H464" stroke="#00f0ff" stroke-width="1"/>
<path d="M464 209.5H475" stroke="#00e000" stroke-width="1"/>
<text x="446" y="220.4" font-size="5" fill="#30f0e8" fill-opacity="0.9" font-family="Liberation Sans" letter-spacing="-0.1">btn</text>
<path d="M451 221.5H464" stroke="#00f0ff" stroke-width="1"/>
<path d="M464 221.5H475" stroke="#00e000" stroke-width="1"/>
<path d="M582 107 L624 107 L624 272 L684 272" stroke="#ff0000" stroke-width="2" fill="none"/>
<path d="M582 124 L614 124 L614 296 L684 296" stroke="#ff0000" stroke-width="2" fill="none"/>
<path d="M581.5 142.5 L605.5 142.5 L605.5 307.5 L684.5 307.5" stroke="#d80000" stroke-width="1" fill="none"/>
<path d="M475.5 209.5 L632.5 209.5" stroke="#d80000" stroke-width="1" fill="none"/>
<path d="M632.5 106.5 L671.5 106.5" stroke="#d80000" stroke-width="1" fill="none"/>
<path d="M632.5 106.9V378" stroke="#d80000" stroke-width="1"/>
<path d="M632.5 330.5 L684.5 330.5" stroke="#d80000" stroke-width="1" fill="none"/>
<path d="M632.5 378.5 L788.5 378.5 L788.5 106.5 L805.5 106.5" stroke="#d80000" stroke-width="1" fill="none"/>
<path d="M475.5 221.5 L640.5 221.5 L640.5 118.5 L671.5 118.5" stroke="#d80000" stroke-width="1" fill="none"/>
<path d="M488.5 130.5 L488.5 231.5 L658.5 231.5 L658.5 319.5 L684.5 319.5" stroke="#d80000" stroke-width="1" fill="none"/>
<path d="M740.5 106.5 L779.5 106.5 L779.5 166.5 L798.5 166.5" stroke="#d80000" stroke-width="1" fill="none"/>
<path d="M756 272 L820 272" stroke="#ff0000" stroke-width="2" fill="none"/>
<path d="M650 284 L684 284" stroke="#ff0000" stroke-width="2" fill="none"/>
<path d="M650 284 L650 386 L928 386 L928 272 L892 272" stroke="#ff0000" stroke-width="2" fill="none"/>
<path d="M788.5 331.5 L820.5 331.5" stroke="#d80000" stroke-width="1" fill="none"/>
<circle cx="632" cy="209.8" r="1.6" fill="#ff0000"/>
<circle cx="632" cy="330.9" r="1.6" fill="#ff0000"/>
<circle cx="788.2" cy="331" r="1.6" fill="#ff0000"/>
<circle cx="488" cy="130.3" r="1.6" fill="#ff0000"/>
<text x="705.0" y="91.2" text-anchor="middle" textLength="44" lengthAdjust="spacingAndGlyphs" font-size="10.3" fill="#00ff00" font-family="Liberation Sans" >debounce</text>
<text x="705.3" y="141.3" text-anchor="middle" textLength="64.60000000000002" lengthAdjust="spacingAndGlyphs" font-size="10.3" fill="#00ff00" font-family="Liberation Sans" >btn_debounce</text>
<rect x="681.3" y="94.7" width="48.40000000000009" height="35.3" fill="none" stroke="#00ff00" stroke-width="1.5"/>
<path d="M681.3 94.7h7l-7 7z M729.7 94.7h-7l7 7z M681.3 130h7l-7 -7z M729.7 130h-7l7 -7z" fill="#00ff00"/>
<path d="M671 106.5H695" stroke="#00e000" stroke-width="1"/>
<path d="M671 118.5H695" stroke="#00e000" stroke-width="1"/>
<path d="M717.5 106.5H740" stroke="#00e000" stroke-width="1"/>
<text x="673" y="104.5" font-size="5" fill="#00e000" fill-opacity="0.9" font-family="Liberation Sans" letter-spacing="-0.1">clk</text>
<text x="675" y="116" font-size="5" fill="#00e000" fill-opacity="0.9" font-family="Liberation Sans" letter-spacing="-0.1">i</text>
<text x="734" y="104.5" font-size="5" fill="#00e000" fill-opacity="0.9" font-family="Liberation Sans" letter-spacing="-0.1">o</text>
<text x="840.8" y="91.2" text-anchor="middle" textLength="81.0" lengthAdjust="spacingAndGlyphs" font-size="10.3" fill="#00ff00" font-family="Liberation Sans" >ov7670_controller</text>
<text x="841.3" y="187.7" text-anchor="middle" textLength="41.39999999999998" lengthAdjust="spacingAndGlyphs" font-size="10.3" fill="#00ff00" font-family="Liberation Sans" >controller</text>
<rect x="818" y="94.7" width="48" height="82.7" fill="none" stroke="#00ff00" stroke-width="1.5"/>
<path d="M818 94.7h7l-7 7z M866 94.7h-7l7 7z M818 177.4h7l-7 -7z M866 177.4h-7l7 -7z" fill="#00ff00"/>
<path d="M805 106.5H829" stroke="#00e000" stroke-width="1"/>
<path d="M798 166.5H829" stroke="#00e000" stroke-width="1"/>
<text x="807" y="104.5" font-size="5" fill="#00e000" fill-opacity="0.9" font-family="Liberation Sans" letter-spacing="-0.1">clk</text>
<text x="800" y="163.5" font-size="5" fill="#00e000" fill-opacity="0.9" font-family="Liberation Sans" letter-spacing="-0.1">resend</text>
<path d="M853 106.5H877" stroke="#00e000" stroke-width="1"/>
<text x="870" y="104.7" font-size="5" fill="#00ff00" fill-opacity="0.9" font-family="Liberation Sans" letter-spacing="-0.1">config_finished</text>
<path d="M877 106.5H947" stroke="#d80000" stroke-width="1"/>
<path d="M947 106.5H959.5" stroke="#00ff00" stroke-width="3"/>
<path d="M959.5 106.5H972.5" stroke="#00f0ff" stroke-width="3"/>
<text x="965" y="104.7" font-size="5" fill="#30f0e8" fill-opacity="0.9" font-family="Liberation Sans" letter-spacing="-0.1">LED(7:0)</text>
<path d="M851.7 118.5H866.7" stroke="#00ff00" stroke-width="3"/>
<path d="M853 118.5H877" stroke="#00e000" stroke-width="1"/>
<text x="870" y="116.60000000000001" font-size="5" fill="#00ff00" fill-opacity="0.9" font-family="Liberation Sans" letter-spacing="-0.1">pwdn</text>
<path d="M877 118.5H947" stroke="#d80000" stroke-width="1"/>
<path d="M948 118.5H959.5" stroke="#00e000" stroke-width="1"/>
<path d="M959.5 118.5H972" stroke="#00c8d8" stroke-width="1"/>
<text x="965" y="116.60000000000001" font-size="5" fill="#30f0e8" fill-opacity="0.9" font-family="Liberation Sans" letter-spacing="-0.1">OV7670_PWDN</text>
<path d="M851.7 130.5H866.7" stroke="#00ff00" stroke-width="3"/>
<path d="M853 130.5H877" stroke="#00e000" stroke-width="1"/>
<text x="870" y="128.7" font-size="5" fill="#00ff00" fill-opacity="0.9" font-family="Liberation Sans" letter-spacing="-0.1">reset</text>
<path d="M877 130.5H947" stroke="#d80000" stroke-width="1"/>
<path d="M948 130.5H959.5" stroke="#00e000" stroke-width="1"/>
<path d="M959.5 130.5H972" stroke="#00c8d8" stroke-width="1"/>
<text x="965" y="128.7" font-size="5" fill="#30f0e8" fill-opacity="0.9" font-family="Liberation Sans" letter-spacing="-0.1">OV7670_RESET</text>
<path d="M853 142.5H877" stroke="#00e000" stroke-width="1"/>
<text x="870" y="140.2" font-size="5" fill="#00ff00" fill-opacity="0.9" font-family="Liberation Sans" letter-spacing="-0.1">sioc</text>
<path d="M877 142.5H947" stroke="#d80000" stroke-width="1"/>
<path d="M948 142.5H959.5" stroke="#00e000" stroke-width="1"/>
<path d="M959.5 142.5H972" stroke="#00c8d8" stroke-width="1"/>
<text x="965" y="140.2" font-size="5" fill="#30f0e8" fill-opacity="0.9" font-family="Liberation Sans" letter-spacing="-0.1">OV7670_SIOC</text>
<path d="M853 154.5H877" stroke="#00e000" stroke-width="1"/>
<text x="870" y="152.2" font-size="5" fill="#00ff00" fill-opacity="0.9" font-family="Liberation Sans" letter-spacing="-0.1">xclk</text>
<path d="M877 154.5H947" stroke="#d80000" stroke-width="1"/>
<path d="M948 154.5H959.5" stroke="#00e000" stroke-width="1"/>
<path d="M959.5 154.5H972" stroke="#00c8d8" stroke-width="1"/>
<text x="965" y="152.2" font-size="5" fill="#30f0e8" fill-opacity="0.9" font-family="Liberation Sans" letter-spacing="-0.1">OV7670_XCLK</text>
<path d="M853 166.5H877" stroke="#00e000" stroke-width="1"/>
<text x="870" y="164.2" font-size="5" fill="#00ff00" fill-opacity="0.9" font-family="Liberation Sans" letter-spacing="-0.1">siod</text>
<path d="M877 166.5H947" stroke="#d80000" stroke-width="1"/>
<path d="M948 166.5H959.5" stroke="#00e000" stroke-width="1"/>
<path d="M959.5 166.5H972" stroke="#00c8d8" stroke-width="1"/>
<text x="965" y="164.2" font-size="5" fill="#30f0e8" fill-opacity="0.9" font-family="Liberation Sans" letter-spacing="-0.1">OV7670_SIOD</text>
<path d="M912 103v7M908 106.5l4-3v6z" stroke="#d80000" fill="none"/>
<path d="M936 106.5V416.4" stroke="#ff0000" stroke-width="2"/>
<text x="719.75" y="256.1" text-anchor="middle" textLength="58.5" lengthAdjust="spacingAndGlyphs" font-size="10.3" fill="#00ff00" font-family="Liberation Sans" >frame_buffer</text>
<text x="718.0" y="353.7" text-anchor="middle" textLength="8" lengthAdjust="spacingAndGlyphs" font-size="10.3" fill="#00ff00" font-family="Liberation Sans" >fb</text>
<rect x="696.2" y="259.1" width="48.4" height="84.2" fill="none" stroke="#00e000" stroke-width="1.4"/>
<path d="M684 271.5H699" stroke="#00ff00" stroke-width="3"/>
<text x="672" y="269.1" font-size="5" fill="#00ff00" fill-opacity="0.9" font-family="Liberation Sans" letter-spacing="-0.1">addrA(14:0)</text>
<path d="M684 284.5H699" stroke="#00ff00" stroke-width="3"/>
<text x="672" y="281.5" font-size="5" fill="#00ff00" fill-opacity="0.9" font-family="Liberation Sans" letter-spacing="-0.1">addrB(14:0)</text>
<path d="M684 295.5H699" stroke="#00ff00" stroke-width="3"/>
<text x="672" y="293.0" font-size="5" fill="#00ff00" fill-opacity="0.9" font-family="Liberation Sans" letter-spacing="-0.1">dinA(7:0)</text>
<path d="M684 307.5H699" stroke="#00ff00" stroke-width="3"/>
<text x="672" y="304.9" font-size="5" fill="#00ff00" fill-opacity="0.9" font-family="Liberation Sans" letter-spacing="-0.1">weA(0:0)</text>
<path d="M684 319.5H696" stroke="#00e000" stroke-width="1"/>
<text x="672" y="316.9" font-size="5" fill="#00ff00" fill-opacity="0.9" font-family="Liberation Sans" letter-spacing="-0.1">clkA</text>
<path d="M684 330.5H696" stroke="#00e000" stroke-width="1"/>
<text x="672" y="328.4" font-size="5" fill="#00ff00" fill-opacity="0.9" font-family="Liberation Sans" letter-spacing="-0.1">clkB</text>
<path d="M742 271.5H756.5" stroke="#00ff00" stroke-width="3"/>
<text x="748" y="269" font-size="5" fill="#00ff00" fill-opacity="0.9" font-family="Liberation Sans" letter-spacing="-0.1">dataB(7:0)</text>
<text x="856.0" y="256.1" text-anchor="middle" textLength="18" lengthAdjust="spacingAndGlyphs" font-size="10.3" fill="#00ff00" font-family="Liberation Sans" >vga</text>
<text x="855.4000000000001" y="353.7" text-anchor="middle" textLength="39.60000000000002" lengthAdjust="spacingAndGlyphs" font-size="10.3" fill="#00ff00" font-family="Liberation Sans" >Inst_vga</text>
<rect x="832.6" y="259.6" width="48.0" height="84.39999999999998" fill="none" stroke="#00ff00" stroke-width="1.5"/>
<path d="M832.6 259.6h7l-7 7z M880.6 259.6h-7l7 7z M832.6 344h7l-7 -7z M880.6 344h-7l7 -7z" fill="#00ff00"/>
<path d="M820 271.5H846" stroke="#00ff00" stroke-width="3"/>
<text x="800" y="269" font-size="5" fill="#00ff00" fill-opacity="0.9" font-family="Liberation Sans" letter-spacing="-0.1">frame_pixel(7:0)</text>
<path d="M820 331.5H845" stroke="#00e000" stroke-width="1"/>
<text x="813" y="328.5" font-size="5" fill="#00ff00" fill-opacity="0.9" font-family="Liberation Sans" letter-spacing="-0.1">clk50</text>
<path d="M866 271.5H892" stroke="#00ff00" stroke-width="3"/>
<text x="886" y="269.1" font-size="5" fill="#00ff00" fill-opacity="0.9" font-family="Liberation Sans" letter-spacing="-0.1">frame_addr(14:0)</text>
<path d="M866 284.5H892" stroke="#00ff00" stroke-width="3"/>
<text x="886" y="281.5" font-size="5" fill="#00ff00" fill-opacity="0.9" font-family="Liberation Sans" letter-spacing="-0.1">vga_blue(3:1)</text>
<path d="M892 284H946" stroke="#ff0000" stroke-width="2"/>
<path d="M946 284.5H959" stroke="#00ff00" stroke-width="3"/>
<path d="M959 284.5H973" stroke="#00f0ff" stroke-width="3"/>
<text x="965" y="281.5" font-size="5" fill="#30f0e8" fill-opacity="0.9" font-family="Liberation Sans" letter-spacing="-0.1">vga_blue(3:1)</text>
<path d="M866 295.5H892" stroke="#00ff00" stroke-width="3"/>
<text x="886" y="293.1" font-size="5" fill="#00ff00" fill-opacity="0.9" font-family="Liberation Sans" letter-spacing="-0.1">vga_green(3:0)</text>
<path d="M892 296H946" stroke="#ff0000" stroke-width="2"/>
<path d="M946 295.5H959" stroke="#00ff00" stroke-width="3"/>
<path d="M959 295.5H973" stroke="#00f0ff" stroke-width="3"/>
<text x="965" y="293.1" font-size="5" fill="#30f0e8" fill-opacity="0.9" font-family="Liberation Sans" letter-spacing="-0.1">vga_green(3:0)</text>
<path d="M866 307.5H892" stroke="#00ff00" stroke-width="3"/>
<text x="886" y="305.1" font-size="5" fill="#00ff00" fill-opacity="0.9" font-family="Liberation Sans" letter-spacing="-0.1">vga_red(3:0)</text>
<path d="M892 308H946" stroke="#ff0000" stroke-width="2"/>
<path d="M946 307.5H959" stroke="#00ff00" stroke-width="3"/>
<path d="M959 307.5H973" stroke="#00f0ff" stroke-width="3"/>
<text x="965" y="305.1" font-size="5" fill="#30f0e8" fill-opacity="0.9" font-family="Liberation Sans" letter-spacing="-0.1">vga_red(2:0)</text>
<path d="M866 319.5H892" stroke="#00e000" stroke-width="1"/>
<text x="886" y="317.1" font-size="5" fill="#00ff00" fill-opacity="0.9" font-family="Liberation Sans" letter-spacing="-0.1">vga_hsync</text>
<path d="M892 319.5H946" stroke="#d80000" stroke-width="1"/>
<path d="M946 319.5H959" stroke="#00e000" stroke-width="1"/>
<path d="M959 319.5H973" stroke="#00c8d8" stroke-width="1"/>
<text x="965" y="317.1" font-size="5" fill="#30f0e8" fill-opacity="0.9" font-family="Liberation Sans" letter-spacing="-0.1">vga_hsync</text>
<path d="M866 331.5H892" stroke="#00e000" stroke-width="1"/>
<text x="886" y="328.5" font-size="5" fill="#00ff00" fill-opacity="0.9" font-family="Liberation Sans" letter-spacing="-0.1">vga_vsync</text>
<path d="M892 331.5H946" stroke="#d80000" stroke-width="1"/>
<path d="M946 331.5H959" stroke="#00e000" stroke-width="1"/>
<path d="M959 331.5H973" stroke="#00c8d8" stroke-width="1"/>
<text x="965" y="328.5" font-size="5" fill="#30f0e8" fill-opacity="0.9" font-family="Liberation Sans" letter-spacing="-0.1">vga_vsync</text>
<path d="M936 416 L936 416" stroke="#ff0000" stroke-width="2" fill="none"/>
<path d="M936.5 416.5 L824.5 416.5" stroke="#d80000" stroke-width="1" fill="none"/>
<path d="M886.5 412.5v8l-5.5-4z" stroke="#d80000" stroke-width="1.2" fill="none"/>
<path d="M824.5 416.5 L818.5 416.5 L818.5 428.5" stroke="#00e000" stroke-width="1" fill="none"/>
<path d="M812 428.5H824" stroke="#00e000" stroke-width="1"/>
<path d="M814 431.5H822" stroke="#00e000" stroke-width="1"/>
<path d="M816 435.5H820" stroke="#00e000" stroke-width="1"/>
<text x="818.5" y="412.1" text-anchor="middle" textLength="15" lengthAdjust="spacingAndGlyphs" font-size="8.5" fill="#00ff00" font-family="Liberation Sans" >gnd</text>
<text x="816.7" y="445.2" text-anchor="middle" textLength="43.39999999999998" lengthAdjust="spacingAndGlyphs" font-size="9" fill="#00ff00" font-family="Liberation Sans" >XST_GND</text>
<rect x="621" y="372.3" width="91" height="29.6" fill="#fffee6"/>
</g></svg>
<div class="t" style="left:623.2px;top:372.7px;line-height:14px;font-size:10px;color:#2a2a2a">Block: ov7670_top</div>
<div class="t" style="left:623.2px;top:387.4px;line-height:14px;font-size:10px;color:#2a2a2a">Type: ov7670_top:1</div>
<div class="a" style="left:1188px;top:44px;width:12px;height:414px;background:#f0f0f0;"></div>
<div class="a" style="left:1189px;top:59px;width:11px;height:357px;background:#cdcdcd;"></div>
<div class="a" style="left:1192px;top:232.5px;width:7px;height:9.5px;background:#ececec;"></div>
<svg style="left:1188px;top:44px" width="12" height="414"><path d="M2.5 10l4-4 4 4" fill="none" stroke="#505050" stroke-width="1.6"/><path d="M2.5 403l4 4 4-4" fill="none" stroke="#505050" stroke-width="1.6"/></svg>
<div class="a" style="left:4px;top:458px;width:1196px;height:20px;background:#f0f0f0;"></div>
<div class="a" style="left:5px;top:459.5px;width:55px;height:18px;background:#e6e6e6;"></div>
<div class="a" style="left:128px;top:459.5px;width:52px;height:18px;background:#e6e6e6;"></div>
<div class="a" style="left:60px;top:458px;width:68px;height:21px;background:#ffffff;border:1px solid #c4c4c4;border-top:none"></div>
<svg style="left:4px;top:458px" width="200" height="22">
<path d="M4 4h9l6.5 7-6.5 7h-9l6.5-7z" fill="#a8b418"/><path d="M4 4h9l6.5 7h-9z" fill="#c8d030"/>
<rect x="63.5" y="6.5" width="8" height="6" fill="#c8dcf4" stroke="#3a6ab8"/><path d="M72 10h3" stroke="#3a6ab8"/><path d="M78 5l3 3-3 3-3-3z M78 13l3 3-3 3-3-3z" fill="#c8dcf4" stroke="#3a6ab8"/>
<rect x="130.5" y="4.5" width="8" height="11" fill="#e4ecf8" stroke="#7a9ad0"/><rect x="134.5" y="7.5" width="8" height="11" fill="#e4ecf8" stroke="#7a9ad0"/>
<path d="M182 7l-4 4 4 4z" fill="#b8b8b8"/>
</svg>
<div class="t" style="left:31px;top:462.0px;line-height:14px;font-size:10px;color:#222;">Start</div>
<div class="t" style="left:90px;top:462.5px;line-height:14px;font-size:10px;color:#222;">Design</div>
<div class="t" style="left:155px;top:462.0px;line-height:14px;font-size:10px;color:#222;">Files</div>
<div class="a" style="left:192px;top:459px;width:12px;height:20px;background:#e8e8e8;border:1px solid #c8c8c8"></div>
<svg style="left:192px;top:459px" width="12" height="20"><path d="M4 5l5 4.5-5 4.5z" fill="#111"/></svg>
<div class="a" style="left:191px;top:460px;width:1px;height:18px;background:#30a0a0;"></div>
<svg style="left:0;top:455px" width="1200" height="30"><rect x="205" y="4" width="832" height="18" fill="#e9e9e9"/><rect x="241" y="8.5" width="12.5" height="11" rx="1.5" fill="#d0d0d0"/><path d="M244.5 11l5.5 6M250 11l-5.5 6" stroke="#fafafa" stroke-width="1.6"/><path d="M260 5v17" stroke="#c8c8c8"/><path d="M266.5 7.5h7l3.5 3.5v10.5h-10.5z" fill="#f4f8fd" stroke="#3a6ab8" stroke-width="1.2"/><path d="M269 13.5h5M269 15.5h5M269 17.5h5" stroke="#5a80c0"/><rect x="369" y="8.5" width="12.5" height="11" rx="1.5" fill="#d0d0d0"/><path d="M372.5 11l5.5 6M378 11l-5.5 6" stroke="#fafafa" stroke-width="1.6"/><path d="M387.5 5v17" stroke="#c8c8c8"/><path d="M395.0 7.5h7l3.5 3.5v10.5h-10.5z" fill="#f4f8fd" stroke="#3a6ab8" stroke-width="1.2"/><path d="M397.5 13.5h5M397.5 15.5h5M397.5 17.5h5" stroke="#5a80c0"/><rect x="467" y="8.5" width="12.5" height="11" rx="1.5" fill="#d0d0d0"/><path d="M470.5 11l5.5 6M476 11l-5.5 6" stroke="#fafafa" stroke-width="1.6"/><path d="M485.5 5v17" stroke="#c8c8c8"/><path d="M492.5 7.5h7l3.5 3.5v10.5h-10.5z" fill="#f4f8fd" stroke="#3a6ab8" stroke-width="1.2"/><path d="M495 13.5h5M495 15.5h5M495 17.5h5" stroke="#5a80c0"/><rect x="564.5" y="8.5" width="12.5" height="11" rx="1.5" fill="#d0d0d0"/><path d="M568.0 11l5.5 6M573.5 11l-5.5 6" stroke="#fafafa" stroke-width="1.6"/><path d="M583.75 5v17" stroke="#c8c8c8"/><path d="M590.0 7.5h7l3.5 3.5v10.5h-10.5z" fill="#f4f8fd" stroke="#3a6ab8" stroke-width="1.2"/><path d="M592.5 13.5h5M592.5 15.5h5M592.5 17.5h5" stroke="#5a80c0"/><rect x="696" y="8.5" width="12.5" height="11" rx="1.5" fill="#d0d0d0"/><path d="M699.5 11l5.5 6M705 11l-5.5 6" stroke="#fafafa" stroke-width="1.6"/><path d="M715 5v17" stroke="#c8c8c8"/><path d="M721.5 7.5h7l3.5 3.5v10.5h-10.5z" fill="#f4f8fd" stroke="#3a6ab8" stroke-width="1.2"/><path d="M724 13.5h5M724 15.5h5M724 17.5h5" stroke="#5a80c0"/><rect x="783.75" y="8.5" width="12.5" height="11" rx="1.5" fill="#d0d0d0"/><path d="M787.25 11l5.5 6M792.75 11l-5.5 6" stroke="#fafafa" stroke-width="1.6"/><path d="M802.5 5v17" stroke="#c8c8c8"/><path d="M809.25 7.5h7l3.5 3.5v10.5h-10.5z" fill="#f4f8fd" stroke="#3a6ab8" stroke-width="1.2"/><path d="M811.75 13.5h5M811.75 15.5h5M811.75 17.5h5" stroke="#5a80c0"/><rect x="870.5" y="8.5" width="12.5" height="11" rx="1.5" fill="#d0d0d0"/><path d="M874.0 11l5.5 6M879.5 11l-5.5 6" stroke="#fafafa" stroke-width="1.6"/><path d="M888.75 5v17" stroke="#c8c8c8"/><path d="M895.5 7.5h7l3.5 3.5v10.5h-10.5z" fill="#f4f8fd" stroke="#3a6ab8" stroke-width="1.2"/><path d="M898 13.5h5M898 15.5h5M898 17.5h5" stroke="#5a80c0"/><rect x="1017" y="8.5" width="12.5" height="11" rx="1.5" fill="#d0d0d0"/><path d="M1020.5 11l5.5 6M1026 11l-5.5 6" stroke="#fafafa" stroke-width="1.6"/><path d="M1035 5v17" stroke="#c8c8c8"/><path d="M402 27h400" stroke="#c0c0c0" stroke-dasharray="1 2"/><rect x="1037" y="3" width="138" height="20" fill="#f8f8f8"/><path d="M1037 22.5h138" stroke="#3a8ad8" stroke-width="2"/><rect x="1042.5" y="5.5" width="11" height="13" fill="#eef4fc" stroke="#3a6ab8"/><path d="M1045 9h6v6h-6z" fill="#f0d040"/><path d="M1046 12h4" stroke="#3070c0"/><rect x="1156" y="7" width="13" height="12" rx="1.5" fill="#e0603a"/><path d="M1159.5 10l6 6M1165.5 10l-6 6" stroke="#fff" stroke-width="1.6"/><rect x="1175" y="3" width="14" height="20" fill="#e8e8e8"/><path d="M1184 9l-5 4.5 5 4.5z" fill="#111"/><path d="M1193 9l4 4.5-4 4.5z" fill="#c0c0c0"/></svg>
<div class="t" style="left:207px;top:461.8px;line-height:14px;font-size:10px;color:#222;">zed)</div>
<div class="t" style="left:289px;top:461.8px;line-height:14px;font-size:10px;color:#222;">ov7670_top.vhd</div>
<div class="t" style="left:417px;top:461.8px;line-height:14px;font-size:10px;color:#222;">coba.vhd</div>
<div class="t" style="left:515px;top:461.8px;line-height:14px;font-size:10px;color:#222;">coba.vho</div>
<div class="t" style="left:612.5px;top:461.8px;line-height:14px;font-size:10px;color:#222;">frame_buffer.vhd</div>
<div class="t" style="left:743.75px;top:461.8px;line-height:14px;font-size:10px;color:#222;">cb.vhd</div>
<div class="t" style="left:830.75px;top:461.8px;line-height:14px;font-size:10px;color:#222;">cb.vho</div>
<div class="t" style="left:918px;top:461.8px;line-height:14px;font-size:10px;color:#222;">ov7670_capture.vhd</div>
<div class="t" style="left:1065px;top:461.8px;line-height:14px;font-size:9.2px;color:#222;">ov7670_top (RTL 1)</div>
<div class="a" style="left:4px;top:479px;width:1196px;height:6px;background:#f0f0f0;"></div>
<svg style="left:0;top:480px" width="1200" height="4"><path d="M402 1.5h400" stroke="#b8b8b8" stroke-dasharray="1 2"/></svg>
<div class="a" style="left:4px;top:485px;width:1196px;height:1px;background:#b8b8b8;"></div>
<div class="a" style="left:4px;top:486px;width:1196px;height:14px;background:#f0f0f0;"></div>
<div class="a" style="left:4px;top:500px;width:1196px;height:1px;background:#b8b8b8;"></div>
<div class="t" style="left:7.6px;top:486.5px;line-height:14px;font-size:9.5px;color:#333;">View by Category</div>
<svg style="left:1148px;top:486px" width="52" height="14">
<path d="M5.5 7h9M5.5 7l2-2M5.5 7l2 2M14.5 7l-2-2M14.5 7l-2 2" stroke="#111" stroke-width="1.2" fill="none"/>
<rect x="19.5" y="3.5" width="7" height="7" fill="none" stroke="#111" stroke-width="1.3"/>
<rect x="34.5" y="2.5" width="5" height="5" fill="none" stroke="#111" stroke-width="1.2"/><rect x="32.5" y="4.5" width="5" height="5" fill="#f0f0f0" stroke="#111" stroke-width="1.2"/>
<path d="M45 3l6 7M51 3l-6 7" stroke="#111" stroke-width="1.4"/>
</svg>
<div class="t" style="left:220.3px;top:502.8px;line-height:14px;font-size:10px;font-weight:bold;color:#111">Design Objects of Top Level Block</div>
<div class="t" style="left:817.5px;top:502.8px;line-height:14px;font-size:10.5px;font-weight:bold;color:#111">Properties of Instance: ov7670_top</div>
<div class="a" style="left:7.6px;top:521px;width:192.4px;height:60px;background:#ffffff;border:1px solid #a8a8a8"></div>
<div class="t" style="left:12.3px;top:525.0px;line-height:14px;font-size:10px;color:#222;">Instances</div>
<svg style="left:178px;top:525px" width="12" height="8"><path d="M1 7l5-5 5 5z" fill="#b0b0b0"/></svg>
<div class="a" style="left:206.3px;top:521px;width:193.0px;height:60px;background:#ffffff;border:1px solid #a8a8a8"></div>
<div class="t" style="left:211.0px;top:525.0px;line-height:14px;font-size:10px;color:#222;">Pins</div>
<svg style="left:377.3px;top:525px" width="12" height="8"><path d="M1 7l5-5 5 5z" fill="#b0b0b0"/></svg>
<div class="a" style="left:405.75px;top:521px;width:192.64999999999998px;height:60px;background:#ffffff;border:1px solid #a8a8a8"></div>
<div class="t" style="left:410.45px;top:525.0px;line-height:14px;font-size:10px;color:#222;">Signals</div>
<svg style="left:576.4px;top:525px" width="12" height="8"><path d="M1 7l5-5 5 5z" fill="#b0b0b0"/></svg>
<div class="a" style="left:27px;top:541.7px;width:172px;height:14.7px;background:#eeeeee;"></div>
<svg style="left:13.5px;top:543px" width="30" height="14"><rect x="0.5" y="2.5" width="8" height="8" fill="#fafafa" stroke="#a0a0a0"/><path d="M2.5 6.5h4M4.5 4.5v4" stroke="#333"/><path d="M9 6.5h3" stroke="#bbb" stroke-dasharray="1 1"/></svg>
<svg style="left:28.7px;top:542px" width="14" height="15"><rect x="4.5" y="0.5" width="5" height="5" fill="#8a6aa8"/><rect x="0.5" y="8.5" width="5" height="5" fill="#8a6aa8"/><rect x="8.5" y="8.5" width="5" height="5" fill="#8a6aa8"/><path d="M7 5.5v2M3 8.5v-1h8v1" stroke="#8a6aa8" fill="none"/></svg>
<div class="t" style="left:49px;top:542.7px;line-height:14px;font-size:10px;color:#222;">ov7670_top</div>
<svg style="left:212.6px;top:543px" width="30" height="14"><rect x="0.5" y="2.5" width="8" height="8" fill="#fafafa" stroke="#a0a0a0"/><path d="M2.5 6.5h4M4.5 4.5v4" stroke="#333"/><path d="M9 6.5h3" stroke="#bbb" stroke-dasharray="1 1"/></svg>
<svg style="left:227.4px;top:542px" width="14" height="15"><rect x="4.5" y="0.5" width="5" height="5" fill="#e02828"/><rect x="0.5" y="8.5" width="5" height="5" fill="#e02828"/><rect x="8.5" y="8.5" width="5" height="5" fill="#e02828"/><path d="M7 5.5v2M3 8.5v-1h8v1" stroke="#e02828" fill="none"/></svg>
<div class="t" style="left:247px;top:542.7px;line-height:14px;font-size:10px;color:#222;">ov7670_top</div>
<svg style="left:411.9px;top:543px" width="30" height="14"><rect x="0.5" y="2.5" width="8" height="8" fill="#fafafa" stroke="#a0a0a0"/><path d="M2.5 6.5h4M4.5 4.5v4" stroke="#333"/><path d="M9 6.5h3" stroke="#bbb" stroke-dasharray="1 1"/></svg>
<svg style="left:426.5px;top:542px" width="14" height="15"><rect x="4.5" y="0.5" width="5" height="5" fill="#e02828"/><rect x="0.5" y="8.5" width="5" height="5" fill="#e02828"/><rect x="8.5" y="8.5" width="5" height="5" fill="#e02828"/><path d="M7 5.5v2M3 8.5v-1h8v1" stroke="#e02828" fill="none"/></svg>
<div class="t" style="left:446.6px;top:542.7px;line-height:14px;font-size:10px;color:#222;">ov7670_top</div>
<svg style="left:602px;top:525px" width="4" height="50"><path d="M2 0v50" stroke="#b8b8b8" stroke-dasharray="1 2"/></svg>
<div class="a" style="left:610.5px;top:520.5px;width:590px;height:60px;background:#ffffff;border:1px solid #a8a8a8;border-right:none"></div>
<div class="a" style="left:611.5px;top:521.5px;width:574px;height:21px;background:#fbfbfb;"></div>
<div class="a" style="left:611.5px;top:542.5px;width:574px;height:1px;background:#f0f0f0;"></div>
<div class="a" style="left:897px;top:522px;width:1px;height:20px;background:#e4e4e4;"></div>
<div class="t" style="left:614.5px;top:525.0px;line-height:14px;font-size:10px;color:#222;">Name</div>
<div class="t" style="left:901.9px;top:525.0px;line-height:14px;font-size:10px;color:#222;">Value</div>
<svg style="left:880px;top:525px" width="12" height="8"><path d="M1 1l5 5 5-5z" fill="#a8a8a8"/></svg>
<div class="a" style="left:611.5px;top:556px;width:574px;height:14px;background:#e8e8e8;"></div>
<div class="t" style="left:614.5px;top:542.5px;line-height:14px;font-size:10px;color:#222;">Type</div>
<div class="t" style="left:614.5px;top:556.0px;line-height:14px;font-size:10px;color:#222;">Part</div>
<div class="t" style="left:614.5px;top:571.0px;line-height:14px;font-size:10px;color:#222;">Original Symbol</div>
<div class="t" style="left:901.9px;top:542.9px;line-height:14px;font-size:10px;color:#222;">ov7670_top:1</div>
<div class="t" style="left:901.9px;top:556.2px;line-height:14px;font-size:10px;color:#222;">xc7a100t-3-csg324</div>
<div class="t" style="left:901.9px;top:571.0px;line-height:14px;font-size:10px;color:#222;">ov7670_top</div>
<div class="a" style="left:1185.3px;top:521px;width:14.7px;height:54px;background:#f0f0f0;"></div>
<div class="a" style="left:1186.5px;top:537.3px;width:12px;height:8px;background:#cdcdcd;"></div>
<svg style="left:1185px;top:521px" width="15" height="54"><path d="M4 12l3.5-3.5 3.5 3.5" fill="none" stroke="#505050" stroke-width="1.5"/><path d="M4 45l3.5 3.5 3.5-3.5" fill="none" stroke="#505050" stroke-width="1.5"/></svg>
</body></html>
